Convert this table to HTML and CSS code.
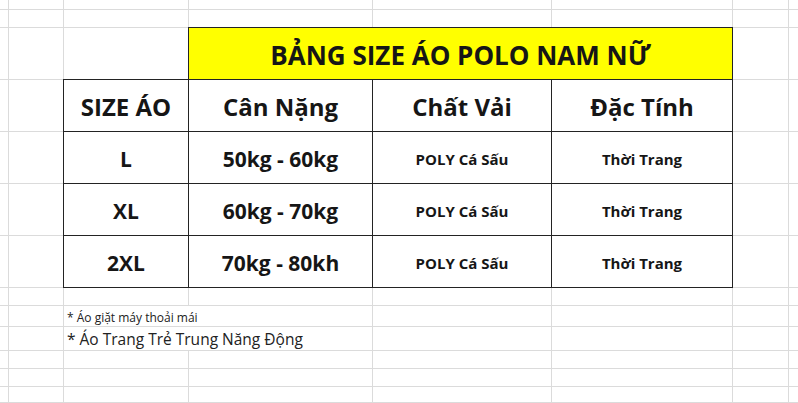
FILE: index.html
```html
<!DOCTYPE html>
<html lang="vi">
<head>
<meta charset="utf-8">
<title>Bảng size áo polo nam nữ</title>
<link rel="stylesheet" href="styles.css">
</head>
<body>
<div class="sheet">
  <!-- row 1 -->
  <div class="c"></div><div class="c"></div><div class="c"></div><div class="c"></div><div class="c"></div><div class="c"></div><div class="c"></div><div class="c"></div>
  <!-- row 2 -->
  <div class="c"></div><div class="c"></div><div class="c"></div><div class="c"></div><div class="c"></div><div class="c"></div><div class="c"></div><div class="c"></div>
  <!-- row 3: title -->
  <div class="c"></div><div class="c"></div><div class="c"></div>
  <div class="t title">BẢNG SIZE ÁO POLO NAM NỮ</div>
  <div class="c"></div><div class="c"></div>
  <!-- row 4: header -->
  <div class="c"></div><div class="c"></div>
  <div class="t head">SIZE ÁO</div>
  <div class="t head">Cân Nặng</div>
  <div class="t head">Chất Vải</div>
  <div class="t head">Đặc Tính</div>
  <div class="c"></div><div class="c"></div>
  <!-- row 5 -->
  <div class="c"></div><div class="c"></div>
  <div class="t big">L</div>
  <div class="t big">50kg - 60kg</div>
  <div class="t small">POLY Cá Sấu</div>
  <div class="t small">Thời Trang</div>
  <div class="c"></div><div class="c"></div>
  <!-- row 6 -->
  <div class="c"></div><div class="c"></div>
  <div class="t big">XL</div>
  <div class="t big">60kg - 70kg</div>
  <div class="t small">POLY Cá Sấu</div>
  <div class="t small">Thời Trang</div>
  <div class="c"></div><div class="c"></div>
  <!-- row 7 -->
  <div class="c"></div><div class="c"></div>
  <div class="t big">2XL</div>
  <div class="t big">70kg - 80kh</div>
  <div class="t small">POLY Cá Sấu</div>
  <div class="t small">Thời Trang</div>
  <div class="c"></div><div class="c"></div>
  <!-- row 8 -->
  <div class="c"></div><div class="c"></div><div class="c"></div><div class="c"></div><div class="c"></div><div class="c"></div><div class="c"></div><div class="c"></div>
  <!-- row 9: note 1 -->
  <div class="c"></div><div class="c"></div>
  <div class="note n1">* Áo giặt máy thoải mái</div>
  <div class="c"></div><div class="c"></div><div class="c"></div><div class="c"></div>
  <!-- row 10: note 2 -->
  <div class="c"></div><div class="c"></div>
  <div class="note n2">* Áo Trang Trẻ Trung Năng Động</div>
  <div class="c"></div><div class="c"></div><div class="c"></div><div class="c"></div>
  <!-- rows 11-14 -->
  <div class="c"></div><div class="c"></div><div class="c"></div><div class="c"></div><div class="c"></div><div class="c"></div><div class="c"></div><div class="c"></div>
  <div class="c"></div><div class="c"></div><div class="c"></div><div class="c"></div><div class="c"></div><div class="c"></div><div class="c"></div><div class="c"></div>
  <div class="c"></div><div class="c"></div><div class="c"></div><div class="c"></div><div class="c"></div><div class="c"></div><div class="c"></div><div class="c"></div>
  <div class="c"></div><div class="c"></div><div class="c"></div><div class="c"></div><div class="c"></div><div class="c"></div><div class="c"></div><div class="c"></div>
</div>
</body>
</html>
```
FILE: styles.css
```css
html, body {
  margin: 0;
  padding: 0;
  background: #ffffff;
}
body {
  width: 798px;
  height: 403px;
  overflow: hidden;
  font-family: "Open Sans", "Noto Sans", "DejaVu Sans", sans-serif;
  color: #161616;
}
.sheet {
  display: grid;
  grid-template-columns: 8px 54px 124px 183px 178px 180px 55px 1fr;
  grid-template-rows: 9px 17px 51px 51px 51px 51px 51px 17px 20px 23px 17px 17px 15px 10px;
  gap: 1px;
  background: #dbdbdb;
  width: 798px;
  height: 414px;
}
.c {
  background: #ffffff;
}
.t {
  background: #ffffff;
  outline: 1px solid #232323;
  display: flex;
  align-items: center;
  justify-content: center;
  font-weight: 700;
  white-space: nowrap;
  padding-top: 2px;
  box-sizing: border-box;
}
.title {
  grid-column: 4 / 7;
  background: #ffff00;
  font-size: 26px;
}
.head {
  font-size: 24px;
}
.big {
  font-size: 21px;
}
.small {
  font-size: 15px;
}
.note {
  grid-column: 3 / 5;
  background: #ffffff;
  padding-left: 3px;
  white-space: nowrap;
  color: #222222;
  box-sizing: border-box;
}
.n1 {
  font-size: 12px;
  line-height: 14px;
  padding-top: 5px;
}
.n2 {
  font-size: 15.5px;
  line-height: 20px;
  padding-top: 2px;
}
```
